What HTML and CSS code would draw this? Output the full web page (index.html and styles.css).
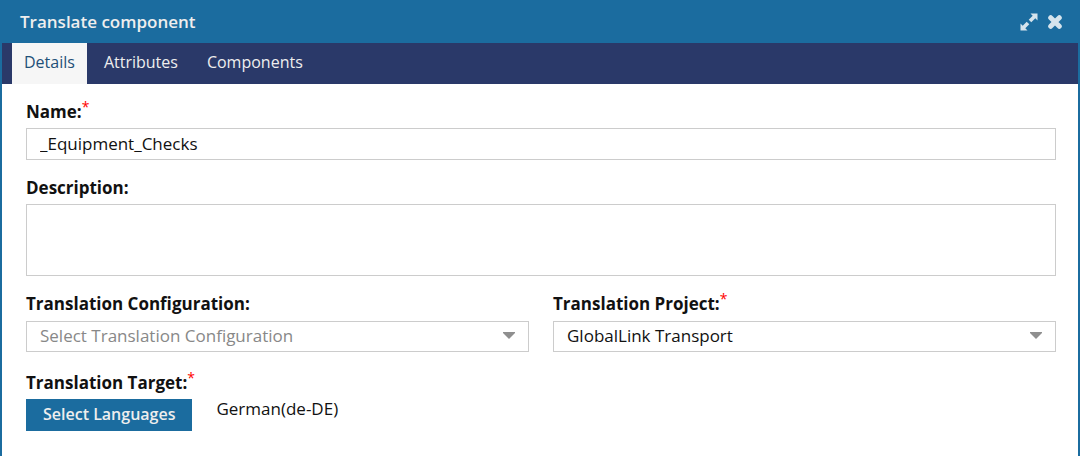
FILE: index.html
```html
<!DOCTYPE html>
<html lang="en">
<head>
    <meta charset="UTF-8">
    <meta name="viewport" content="width=device-width, initial-scale=1.0">
    <title>Translate component</title>
    <link rel="stylesheet" href="styles.css">
</head>
<body>
    <div class="dialog">
        <header class="dialog-header">
            <h1>Translate component</h1>
            <div class="dialog-actions">
                <button type="button" class="icon-btn" aria-label="Expand">
                    <svg width="18" height="18" viewBox="0 0 18 18">
                        <path d="M10.500 .5h7V7.500l-2.200-2.200-4 4-2.600-2.600 4-4z"/>
                        <path d="M7.500 17.500H.5V10.500l2.200 2.200 4-4 2.600 2.600-4 4z"/>
                        <path class="gap" d="M6 6l6 6"/>
                    </svg>
                </button>
                <button type="button" class="icon-btn" aria-label="Close">
                    <svg width="14" height="14" viewBox="0 0 14 14">
                        <path class="cross" d="M2.700 2.700l8.600 8.600M11.300 2.700l-8.600 8.600"/>
                    </svg>
                </button>
            </div>
        </header>

        <nav class="tabs">
            <a href="#details" class="tab active">Details</a>
            <a href="#attributes" class="tab">Attributes</a>
            <a href="#components" class="tab">Components</a>
        </nav>

        <form class="dialog-body" id="details">
            <div class="field">
                <label for="name">Name:<span class="required">*</span></label>
                <input type="text" id="name" class="control" value="_Equipment_Checks" required>
            </div>

            <div class="field">
                <label for="description">Description:</label>
                <textarea id="description" class="control"></textarea>
            </div>

            <div class="field-row">
                <div class="field">
                    <label for="configuration">Translation Configuration:</label>
                    <div class="select-wrap">
                        <select id="configuration" class="control placeholder">
                            <option>Select Translation Configuration</option>
                        </select>
                        <svg class="arrow" width="12" height="7" viewBox="0 0 12 7"><path d="M0 0h12v1L6 7 0 1z"/></svg>
                    </div>
                </div>
                <div class="field">
                    <label for="project">Translation Project:<span class="required">*</span></label>
                    <div class="select-wrap">
                        <select id="project" class="control" required>
                            <option>GlobalLink Transport</option>
                        </select>
                        <svg class="arrow" width="12" height="7" viewBox="0 0 12 7"><path d="M0 0h12v1L6 7 0 1z"/></svg>
                    </div>
                </div>
            </div>

            <div class="field">
                <label for="languages">Translation Target:<span class="required">*</span></label>
                <div class="target">
                    <button type="button" id="languages" class="btn">Select Languages</button>
                    <span class="language">German(de-DE)</span>
                </div>
            </div>
        </form>
    </div>
</body>
</html>
```

FILE: styles.css
```css
* {
    box-sizing: border-box;
}
body {
    margin: 0;
    font-family: "Open Sans", sans-serif;
    font-size: 17px;
    line-height: 24px;
    color: #111;
    background: #fff;
}
.dialog {
    min-height: 100vh;
    border: solid #1b6c9f;
    border-width: 0 2px;
}

/* Header */
.dialog-header {
    display: flex;
    justify-content: space-between;
    align-items: center;
    height: 43px;
    padding: 0 16px 0 18px;
    background: #1b6c9f;
}
.dialog-header h1 {
    margin: 0;
    font-size: 17px;
    font-weight: 600;
    color: #eee;
}
.dialog-actions {
    display: flex;
    align-items: center;
    gap: 10px;
}
.icon-btn {
    display: flex;
    padding: 0;
    border: none;
    background: none;
    cursor: pointer;
}
.icon-btn svg {
    fill: #d5e4ed;
}
.icon-btn .gap {
    stroke: #1b6c9f;
    stroke-width: 1;
}
.icon-btn .cross {
    stroke: #d5e4ed;
    stroke-width: 5;
    stroke-linecap: round;
}

/* Tabs */
.tabs {
    display: flex;
    gap: 5px;
    height: 41px;
    padding-left: 10px;
    background: #2a3969;
    font-size: 16px;
}
.tab {
    padding: 7px 12px;
    color: #eee;
    text-decoration: none;
}
.tab.active {
    color: #1f5078;
    background: #f6f6f6;
}

/* Form */
.dialog-body {
    display: flex;
    flex-direction: column;
    gap: 16px;
    padding: 16px 22px 24px 24px;
}
.field {
    display: flex;
    flex-direction: column;
    gap: 4px;
}
.field-row {
    display: grid;
    grid-template-columns: 1fr 1fr;
    gap: 24px;
    padding-bottom: 3px;
}
.field-row .field {
    gap: 5px;
}
label {
    font-weight: 700;
}
.required {
    color: #f00;
    font-weight: 400;
    font-size: 14px;
    line-height: 0;
    vertical-align: 6px;
}
.control {
    display: block;
    width: 100%;
    height: 32px;
    margin: 0;
    padding: 0 13px 2px;
    border: 1px solid #ccc;
    border-radius: 0;
    background: #fff;
    font: inherit;
    color: #111;
}
textarea.control {
    height: 72px;
    resize: none;
}
select.control {
    height: 31px;
    padding-bottom: 1px;
    appearance: none;
}
.control.placeholder {
    color: #888;
}
.select-wrap {
    position: relative;
}
.arrow {
    position: absolute;
    top: 11px;
    right: 14px;
    fill: #8f8f8f;
    pointer-events: none;
}
.target {
    display: flex;
    align-items: flex-start;
    gap: 24px;
}
.btn {
    height: 32px;
    padding: 0 17px 2px;
    border: none;
    background: #1b6c9f;
    color: #eee;
    font: inherit;
    font-size: 16px;
    font-weight: 600;
    cursor: pointer;
}
.language {
    line-height: 20px;
}
```
